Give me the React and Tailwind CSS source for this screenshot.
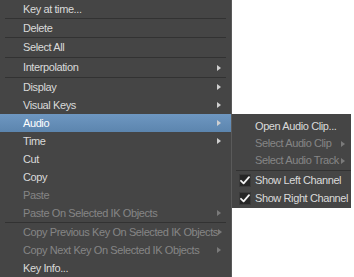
import React from "react";

const FONT = {
  fontFamily: '"Liberation Sans", Arial, sans-serif',
  letterSpacing: "-0.4px",
};

function Arrow({ dim }) {
  return (
    <svg width="4" height="6" viewBox="0 0 4 6" className="shrink-0">
      <path d="M0 0 L4 3 L0 6 Z" fill={dim ? "#7a7a7a" : "#d0d0d0"} />
    </svg>
  );
}

function Sep({ className = "" }) {
  return <div className={"h-px bg-[#323232] " + className} />;
}

function Item({ label, h = "h-[18px]", sub, dim, active }) {
  return (
    <div
      className={
        "flex items-center pl-[23px] pr-[10px] " +
        h +
        " " +
        (active
          ? "bg-gradient-to-b from-[#6e97c1] to-[#5c85ae] text-white"
          : dim
          ? "text-[#858585]"
          : "text-[#dadada]")
      }
    >
      <span className="flex-1 whitespace-nowrap">{label}</span>
      {sub && <Arrow dim={dim} />}
    </div>
  );
}

function Check() {
  return (
    <div className="w-[12px] h-[13px] bg-[#262626] border border-[#3a3a3a] flex items-center justify-center">
      <svg width="10" height="9" viewBox="0 0 10 9">
        <path
          d="M1 4.8 L3.6 7.4 L9 1.2"
          fill="none"
          stroke="#f2f2f2"
          strokeWidth="1.8"
          strokeLinecap="round"
          strokeLinejoin="round"
        />
      </svg>
    </div>
  );
}

function SubItem({ label, h = "h-[18px]", sub, dim, checked }) {
  return (
    <div
      className={
        "flex items-center pr-[6px] " +
        h +
        " " +
        (dim ? "text-[#858585]" : "text-[#dadada]")
      }
    >
      <div className="w-[23px] shrink-0 flex justify-center pl-[2px]">
        {checked && <Check />}
      </div>
      <span className="flex-1 whitespace-nowrap">{label}</span>
      {sub && <Arrow dim />}
    </div>
  );
}

export default function App() {
  return (
    <div
      className="w-[354px] h-[277px] bg-white flex items-start overflow-hidden text-[11px]"
      style={FONT}
    >
      {/* Main menu */}
      <div className="w-[232px] h-[277px] bg-[#454545] border-r border-[#5a5a5a] flex flex-col shrink-0 pt-px">
        <Item label="Key at time..." h="h-[17px]" />
        <Sep className="mx-[5px]" />
        <Item label="Delete" h="h-[18px]" />
        <Sep className="mx-[5px]" />
        <Item label="Select All" h="h-[19px]" />
        <Sep className="mx-[5px]" />
        <Item label="Interpolation" h="h-[19px]" sub />
        <Sep className="mx-[5px]" />
        <Item label="Display" sub />
        <Item label="Visual Keys" sub />
        <Item label="Audio" sub active />
        <Item label="Time" sub />
        <Item label="Cut" />
        <Item label="Copy" />
        <Item label="Paste" dim />
        <Item label="Paste On Selected IK Objects" sub dim />
        <Sep className="mx-[5px]" />
        <Item label="Copy Previous Key On Selected IK Objects" sub dim />
        <Item label="Copy Next Key On Selected IK Objects" sub dim />
        <Item label="Key Info..." />
      </div>

      {/* Audio submenu */}
      <div className="mt-[114px] w-[119px] h-[94px] bg-[#454545] flex flex-col pt-[3px] shrink-0">
        <SubItem label="Open Audio Clip..." />
        <SubItem label="Select Audio Clip" h="h-[17px]" sub dim />
        <SubItem label="Select Audio Track" h="h-[17px]" sub dim />
        <Sep className="ml-[4px] my-[0.5px]" />
        <SubItem label="Show Left Channel" checked />
        <SubItem label="Show Right Channel" checked />
      </div>
    </div>
  );
}
